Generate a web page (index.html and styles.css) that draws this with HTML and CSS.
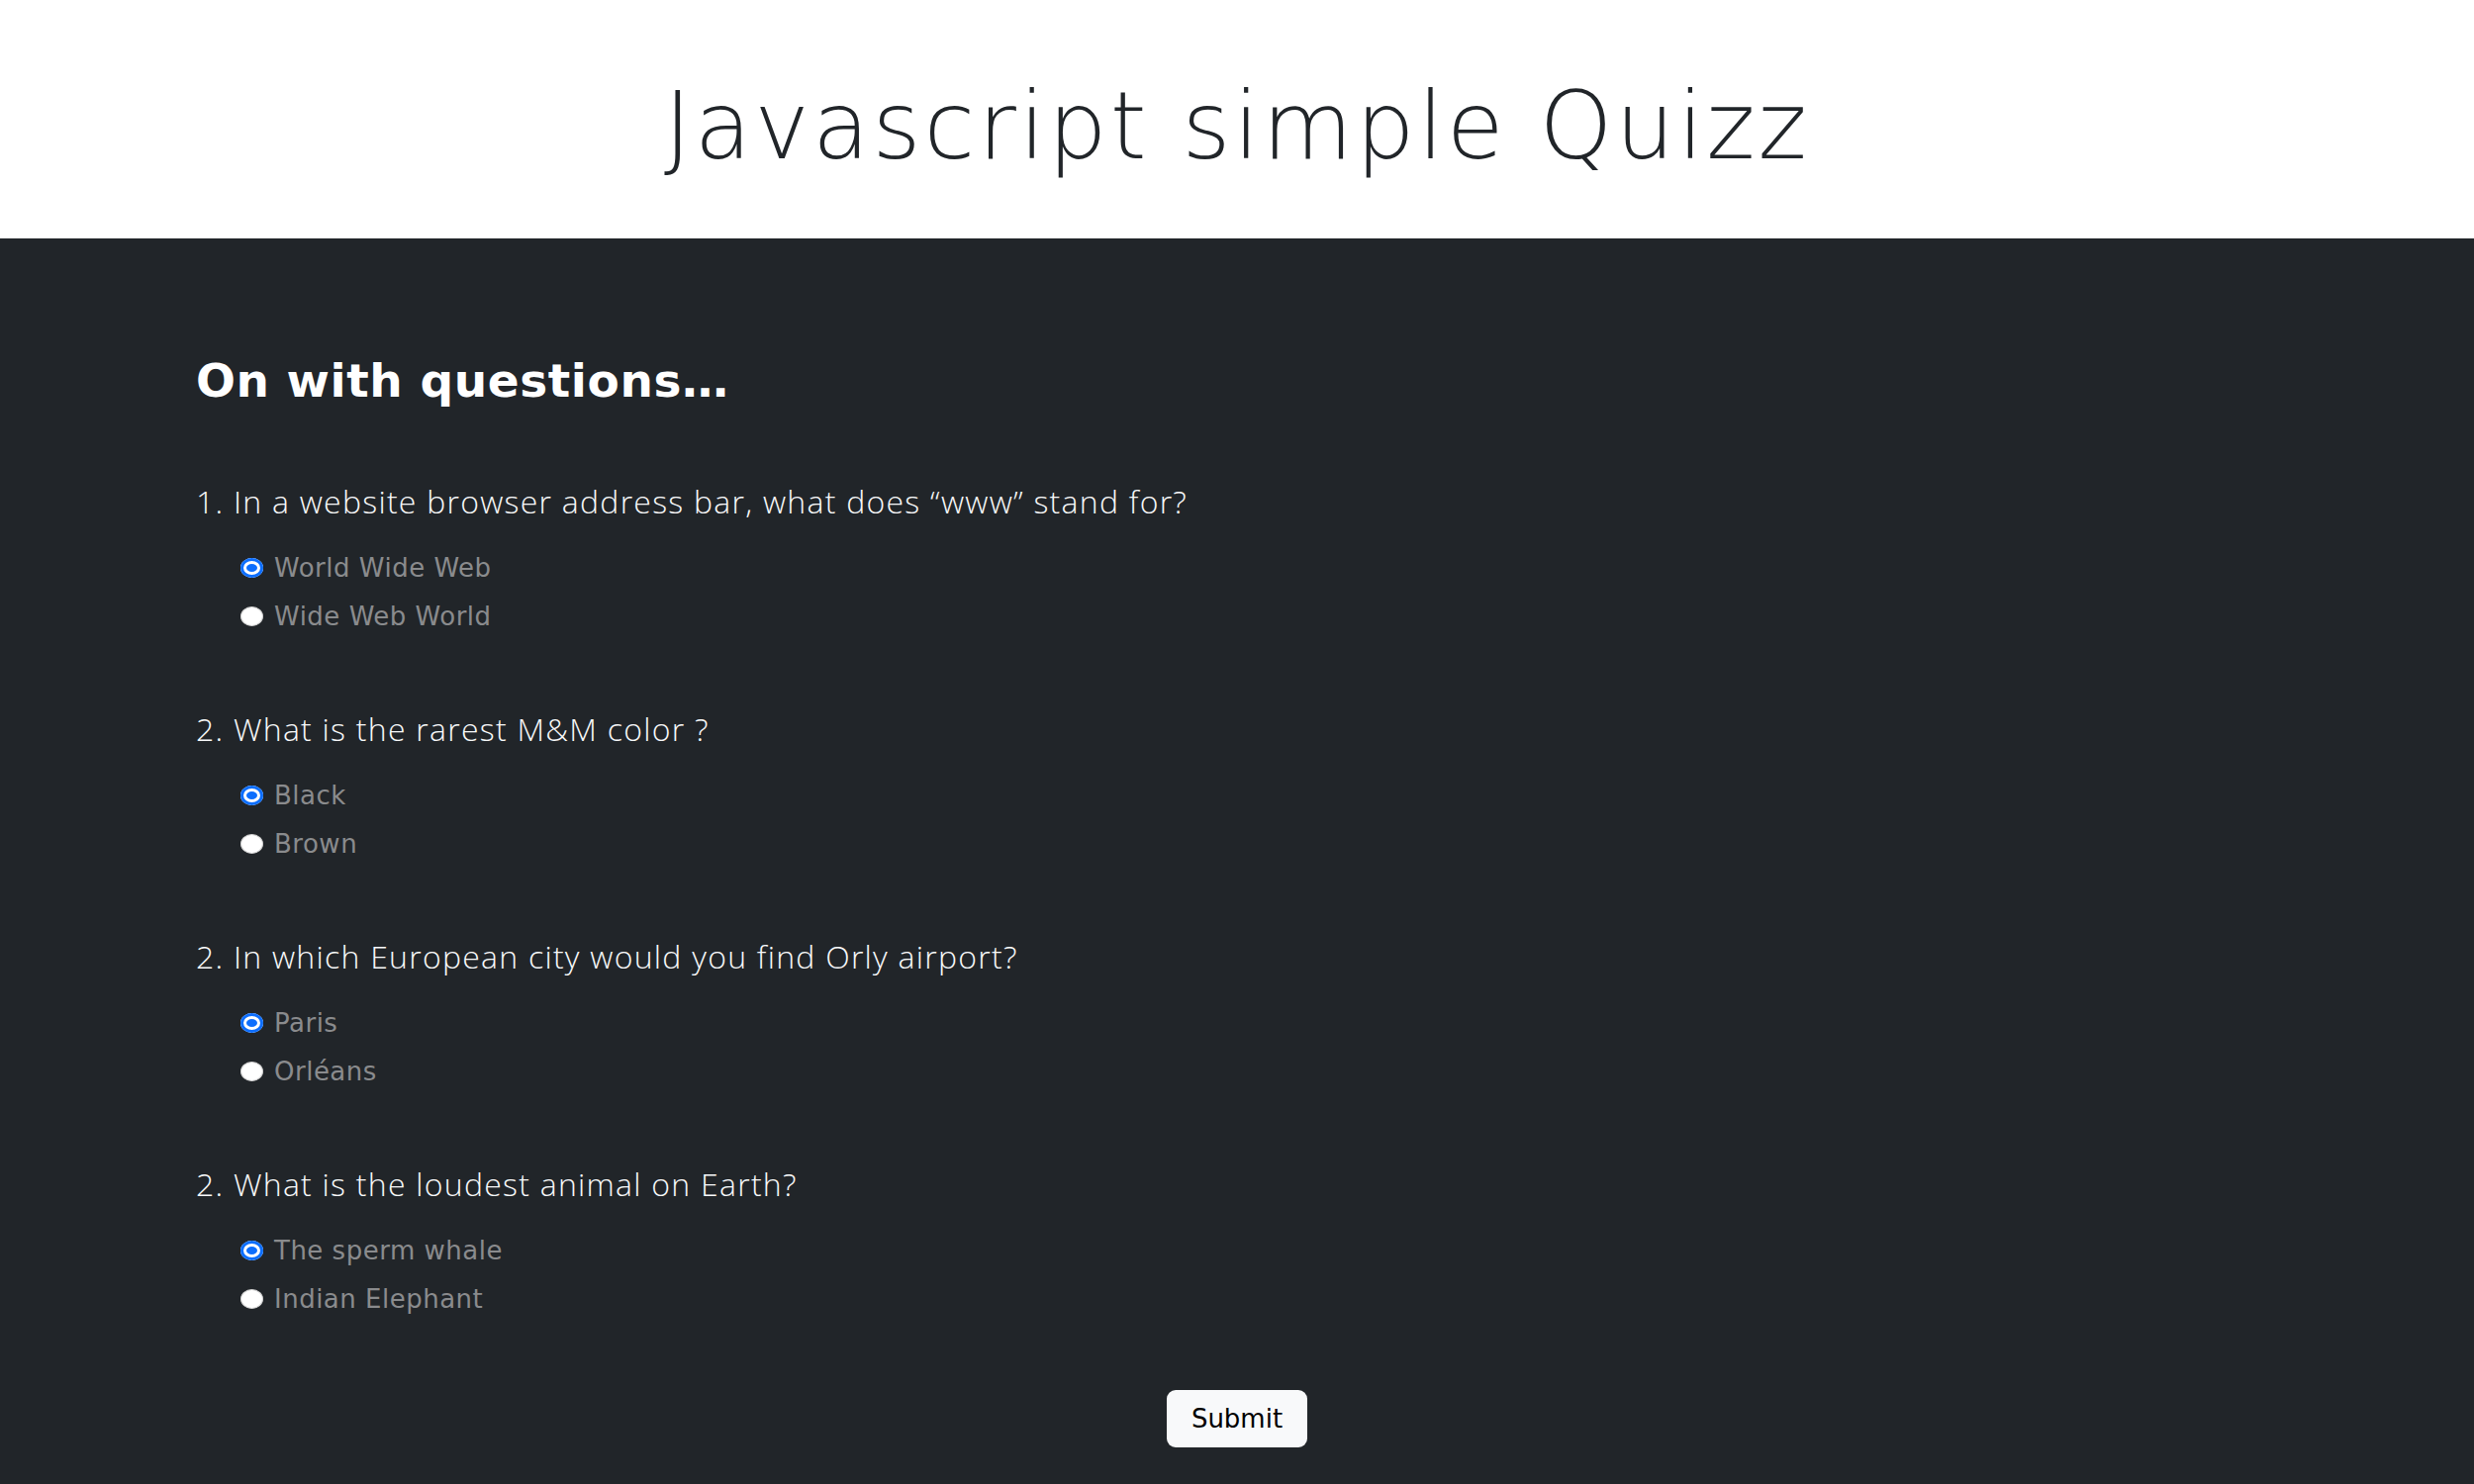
FILE: index.html
```html
<!DOCTYPE html>
<html lang="en">
<head>
<meta charset="utf-8">
<title>Javascript simple Quizz</title>
<link rel="stylesheet" href="styles.css">
</head>
<body>
<header class="top">
  <h1 class="title">Javascript simple Quizz</h1>
</header>
<main class="dark">
  <div class="container">
    <h2 class="heading">On with questions…</h2>
    <form class="quiz">
      <div class="question">
        <p class="q-title">1. In a website browser address bar, what does “www” stand for?</p>
        <label class="option"><input type="radio" name="q1" checked><span>World Wide Web</span></label>
        <label class="option"><input type="radio" name="q1"><span>Wide Web World</span></label>
      </div>
      <div class="question">
        <p class="q-title">2. What is the rarest M&amp;M color ?</p>
        <label class="option"><input type="radio" name="q2" checked><span>Black</span></label>
        <label class="option"><input type="radio" name="q2"><span>Brown</span></label>
      </div>
      <div class="question">
        <p class="q-title">2. In which European city would you find Orly airport?</p>
        <label class="option"><input type="radio" name="q3" checked><span>Paris</span></label>
        <label class="option"><input type="radio" name="q3"><span>Orléans</span></label>
      </div>
      <div class="question">
        <p class="q-title">2. What is the loudest animal on Earth?</p>
        <label class="option"><input type="radio" name="q4" checked><span>The sperm whale</span></label>
        <label class="option"><input type="radio" name="q4"><span>Indian Elephant</span></label>
      </div>
      <div class="actions">
        <button type="button" class="submit">Submit</button>
      </div>
    </form>
  </div>
</main>
</body>
</html>
```
FILE: styles.css
```css
* { box-sizing: border-box; }
html, body { margin: 0; padding: 0; }
body {
  font-family: "Open Sans", "Noto Sans", "DejaVu Sans", sans-serif;
  background: #212529;
  min-height: 1500px;
}
.top {
  background: #ffffff;
  height: 241px;
  padding-top: 70px;
}
.title {
  margin: 0;
  text-align: center;
  font-family: "DejaVu Sans", "Open Sans", sans-serif;
  font-size: 94px;
  font-weight: 200;
  line-height: 115px;
  color: #212529;
  letter-spacing: 3px;
}
.dark {
  background: #212529;
  padding: 115px 0 0 0;
  min-height: 1259px;
}
.container {
  padding-left: 198px;
  padding-right: 198px;
}
.heading {
  margin: 0;
  font-family: "DejaVu Sans", "Open Sans", sans-serif;
  font-size: 47px;
  font-weight: 700;
  line-height: 58px;
  letter-spacing: 0.6px;
  color: #ffffff;
}
.quiz {
  margin-top: 69px;
}
.question {
  display: flex;
  flex-direction: column;
  margin-bottom: 66px;
}
.q-title {
  margin: 0 0 18px 0;
  font-size: 32px;
  font-weight: 300;
  line-height: 48px;
  letter-spacing: 1.25px;
  color: #f8f9fa;
}
.option {
  display: flex;
  align-items: center;
  gap: 11px;
  height: 49px;
  padding-left: 45px;
  font-family: "DejaVu Sans", "Open Sans", sans-serif;
  font-size: 26px;
  letter-spacing: 0.5px;
  color: #8a8b8d;
}
.option input {
  appearance: none;
  -webkit-appearance: none;
  margin: 0;
  width: 23px;
  height: 20px;
  border-radius: 50%;
  background: #ffffff;
  border: 1px solid #d0d0d0;
  flex: none;
}
.option input:checked {
  border: none;
  background: #0d6efd;
  box-shadow: inset 0 0 0 3px #0d6efd, inset 0 0 0 6px #ffffff;
}
.actions {
  display: flex;
  justify-content: center;
  padding-top: 2px;
  margin-left: -198px;
  margin-right: -198px;
}
.submit {
  font-family: "DejaVu Sans", "Open Sans", sans-serif;
  font-size: 26px;
  height: 58px;
  padding: 0 25px;
  border: none;
  border-radius: 9px;
  background: #f8f9fa;
  color: #000000;
}
```
